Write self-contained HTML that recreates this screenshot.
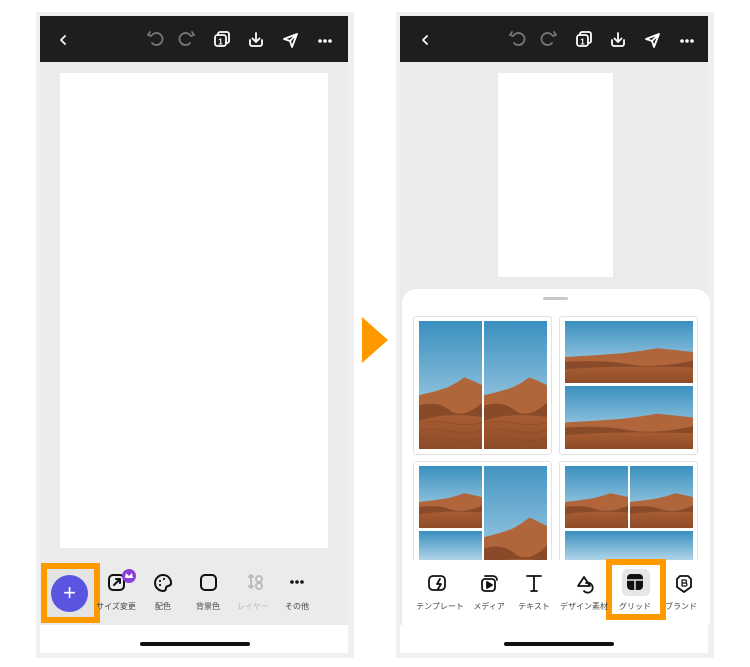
<!DOCTYPE html>
<html><head><meta charset="utf-8"><style>
*{margin:0;padding:0;box-sizing:border-box}
body{width:750px;height:667px;background:#fff;position:relative;overflow:hidden;font-family:"Liberation Sans","Noto Sans CJK JP",sans-serif}
.a{position:absolute}
.phone{position:absolute;top:12px;width:318px;height:646px;background:#efefef;border-radius:2px}
.top{position:absolute;left:4px;top:4px;width:308px;height:46px;background:#1e1e1e}
.bg{position:absolute;left:4px;top:50px;width:308px;height:563px;background:#ebebeb}
.home{position:absolute;left:4px;top:613px;width:308px;height:28px;background:#fff}
.bar{position:absolute;top:17px;width:110px;height:4px;border-radius:2px;background:#111;left:99px}
.lbl{position:absolute;font-size:8px;color:#444;white-space:nowrap;transform:translateX(-50%)}
.cell{position:absolute;overflow:hidden;background:#6aa8cf}
.card{position:absolute;background:#fff;border:1px solid #e2e2e2;border-radius:3px}
</style></head><body>
<svg width="0" height="0" style="position:absolute">
<defs>
<linearGradient id="sky" x1="0" y1="0" x2="0" y2="1"><stop offset="0" stop-color="#3a8fbf"/><stop offset="1" stop-color="#c3e0ef"/></linearGradient>
<linearGradient id="sand" x1="0" y1="0" x2="0" y2="1"><stop offset="0" stop-color="#a85d33"/><stop offset="1" stop-color="#8e4b28"/></linearGradient>
<symbol id="des" viewBox="0 0 100 100" preserveAspectRatio="none">
<rect width="100" height="100" fill="url(#sky)"/>
<path d="M0 58 L25 55 L45 52 L60 48 L72 44 L82 46 L100 50 L100 100 L0 100Z" fill="#b0653a"/>
<path d="M0 66 Q30 62 50 70 Q70 77 100 64 L100 100 L0 100Z" fill="#6a351b" opacity=".55"/>
<path d="M0 78 Q40 71 100 75 L100 100 L0 100Z" fill="url(#sand)"/>
</symbol>
</defs></svg>

<!-- LEFT PHONE -->
<div class="phone" style="left:36px">
<div class="top"></div>
<div class="bg"></div>
<div class="home"><div class="bar" style="left:100px"></div></div>
</div>
<svg class="a" style="left:40px;top:16px" width="308" height="46" fill="none" stroke="#fff" stroke-width="1.8" stroke-linecap="round" stroke-linejoin="round">
<path d="M25 20l-4 4 4 4"/>
<g stroke="#777"><path d="M112 23a6 6 0 1 1 0 8" transform="translate(0,-4)"/><path d="M110 16l-2 3 3 1"/><path d="M150 23a6 6 0 1 0 0 8" transform="translate(0,-4)"/><path d="M152 16l2 3-3 1"/></g>
<rect x="175" y="19" width="11" height="11" rx="2.5"/><path d="M178 19v-1a2 2 0 0 1 2-2h7a2 2 0 0 1 2 2v7a2 2 0 0 1-2 2h-1"/>
<text x="180.5" y="28.5" fill="#fff" stroke="none" font-size="8" font-weight="bold" text-anchor="middle" font-family="Liberation Sans">1</text>
<path d="M216 17v9m-3.5-3.5 3.5 3.5 3.5-3.5M210 24v4a2 2 0 0 0 2 2h8a2 2 0 0 0 2-2v-4"/>
<path d="M257 18l-13 5 6 2 2 6z M250 25l7-7"/>
<g fill="#fff" stroke="none"><circle cx="280" cy="25" r="1.8"/><circle cx="285" cy="25" r="1.8"/><circle cx="290" cy="25" r="1.8"/></g>
</svg>
<div class="a" style="left:60px;top:73px;width:268px;height:475px;background:#fff"></div>
<div class="a" style="left:41px;top:563px;width:59px;height:60px;background:#ff9900"></div>
<div class="a" style="left:47px;top:569px;width:47px;height:48px;background:#e4e4e4"></div>
<div class="a" style="left:51px;top:575px;width:37px;height:37px;border-radius:50%;background:#5a55e0;color:#fff;font-size:22px;line-height:36px;text-align:center">+</div>
<svg class="a" style="left:100px;top:565px" width="240" height="35" fill="none" stroke="#111" stroke-width="2" stroke-linejoin="round" stroke-linecap="round">
<rect x="9" y="10" width="15" height="15" rx="4"/><path d="M14 20l6-6m-4 0h4v4"/>
<circle cx="29" cy="11" r="7" fill="#8a3fd6" stroke="none"/><path d="M25 13l1-5 3 3 3-3 1 5z" fill="#fff" stroke="none"/>
<path d="M63 26a8 8 0 1 1 8-7c-1 3-5 1-5 4 0 2-1 3-3 3z"/>
<g fill="#111" stroke="none"><circle cx="60" cy="16" r="1.1"/><circle cx="64" cy="14" r="1.1"/><circle cx="60" cy="20" r="1.1"/></g>
<rect x="101" y="10" width="15" height="15" rx="4"/>
<g stroke="#bbb"><path d="M151 10v13m-2-2 2 2 2-2M149 12l2-2 2 2"/><circle cx="159" cy="14" r="3"/><circle cx="159" cy="21" r="3"/></g>
<g fill="#111" stroke="none"><circle cx="192" cy="17" r="1.8"/><circle cx="197" cy="17" r="1.8"/><circle cx="202" cy="17" r="1.8"/></g>
</svg>
<div class="lbl" style="left:116px;top:601px">サイズ変更</div>
<div class="lbl" style="left:163px;top:601px">配色</div>
<div class="lbl" style="left:208px;top:601px">背景色</div>
<div class="lbl" style="left:253px;top:601px;color:#bbb">レイヤー</div>
<div class="lbl" style="left:297px;top:601px">その他</div>

<!-- ARROW -->
<svg class="a" style="left:362px;top:317px" width="26" height="46"><path d="M0 0L26 23L0 46Z" fill="#ff9900"/></svg>

<!-- RIGHT PHONE -->
<div class="phone" style="left:396px">
<div class="top"></div>
<div class="bg"></div>
<div class="home"><div class="bar" style="left:104px"></div></div>
</div>
<svg class="a" style="left:400px;top:16px" width="308" height="46" fill="none" stroke="#fff" stroke-width="1.8" stroke-linecap="round" stroke-linejoin="round">
<path d="M27 20l-4 4 4 4"/>
<g stroke="#777"><path d="M114 23a6 6 0 1 1 0 8" transform="translate(0,-4)"/><path d="M112 16l-2 3 3 1"/><path d="M152 23a6 6 0 1 0 0 8" transform="translate(0,-4)"/><path d="M154 16l2 3-3 1"/></g>
<rect x="177" y="19" width="11" height="11" rx="2.5"/><path d="M180 19v-1a2 2 0 0 1 2-2h7a2 2 0 0 1 2 2v7a2 2 0 0 1-2 2h-1"/>
<text x="182.5" y="28.5" fill="#fff" stroke="none" font-size="8" font-weight="bold" text-anchor="middle" font-family="Liberation Sans">1</text>
<path d="M218 17v9m-3.5-3.5 3.5 3.5 3.5-3.5M212 24v4a2 2 0 0 0 2 2h8a2 2 0 0 0 2-2v-4"/>
<path d="M259 18l-13 5 6 2 2 6z M252 25l7-7"/>
<g fill="#fff" stroke="none"><circle cx="282" cy="25" r="1.8"/><circle cx="287" cy="25" r="1.8"/><circle cx="292" cy="25" r="1.8"/></g>
</svg>
<div class="a" style="left:498px;top:73px;width:115px;height:204px;background:#fff"></div>
<div class="a" style="left:402px;top:289px;width:308px;height:336px;background:#fff;border-radius:14px 14px 0 0"></div>
<div class="a" style="left:543px;top:297px;width:25px;height:3px;border-radius:2px;background:#c8c8c8"></div>

<div class="card" style="left:413px;top:316px;width:139px;height:139px"></div>
<div class="card" style="left:559px;top:316px;width:139px;height:139px"></div>
<div class="card" style="left:413px;top:461px;width:139px;height:110px"></div>
<div class="card" style="left:559px;top:461px;width:139px;height:110px"></div>

<svg class="cell" style="left:419px;top:321px" width="63" height="128"><use href="#des" width="63" height="128"/><g stroke="#7a3f20" stroke-width=".5" fill="none" opacity=".6"><path d="M0 110q15-3 30 0t33 0M0 118q15-3 30 0t33 0M0 102q15-3 30 0t33 0"/></g></svg>
<svg class="cell" style="left:484px;top:321px" width="63" height="128"><use href="#des" width="63" height="128"/><g stroke="#7a3f20" stroke-width=".5" fill="none" opacity=".6"><path d="M0 110q15-3 30 0t33 0M0 118q15-3 30 0t33 0M0 102q15-3 30 0t33 0"/></g></svg>
<svg class="cell" style="left:565px;top:321px" width="128" height="62"><use href="#des" width="128" height="62"/></svg>
<svg class="cell" style="left:565px;top:386px" width="128" height="63"><use href="#des" width="128" height="63"/></svg>

<svg class="cell" style="left:419px;top:466px" width="63" height="62"><use href="#des" width="63" height="62"/></svg>
<svg class="cell" style="left:419px;top:531px" width="63" height="34"><rect width="63" height="34" fill="url(#sky)"/></svg>
<svg class="cell" style="left:484px;top:466px" width="63" height="99"><use href="#des" width="63" height="140" y="-10"/></svg>
<svg class="cell" style="left:565px;top:466px" width="63" height="62"><use href="#des" width="63" height="62"/></svg>
<svg class="cell" style="left:630px;top:466px" width="63" height="62"><use href="#des" width="63" height="62"/></svg>
<svg class="cell" style="left:565px;top:531px" width="128" height="34"><rect width="128" height="34" fill="url(#sky)"/></svg>

<div class="a" style="left:402px;top:560px;width:308px;height:65px;background:#fff"></div>
<div class="a" style="left:606px;top:559px;width:60px;height:61px;background:#ff9900"></div>
<div class="a" style="left:612px;top:565px;width:48px;height:49px;background:#fff"></div>
<div class="a" style="left:622px;top:569px;width:28px;height:27px;border-radius:5px;background:#e6e6e6"></div>
<svg class="a" style="left:400px;top:565px" width="310" height="35" fill="none" stroke="#111" stroke-width="1.8" stroke-linejoin="round" stroke-linecap="round">
<path d="M33 11h8a4 4 0 0 1 4 4v6a4 4 0 0 1-4 4h-8a4 4 0 0 1-4-4v-6a4 4 0 0 1 4-4z M40 14l-3 5h4l-3 5"/>
<rect x="82" y="14" width="13" height="12" rx="3"/><path d="M85 11h8a4 4 0 0 1 4 4" /><path d="M87 17v6l5-3z" fill="#111"/>
<path d="M127 11h14M134 11v15M131 26h6"/>
<path d="M184 12l-6 9h12z M186 18a5 5 0 1 1-2 8"/>
<rect x="227" y="9" width="16" height="16" rx="4" fill="#111" stroke="none"/><path d="M227 15h16M235 15v10" stroke="#e6e6e6" stroke-width="1.5"/>
<path d="M280 11h8l3 3v8l-7 5-7-5v-8z"/><path d="M282 15h3a1.5 1.5 0 0 1 0 3h-3v-3zm0 3h3.5a1.5 1.5 0 0 1 0 3h-3.5z" stroke-width="1.2"/>
</svg>
<div class="lbl" style="left:440px;top:601px">テンプレート</div>
<div class="lbl" style="left:489px;top:601px">メディア</div>
<div class="lbl" style="left:534px;top:601px">テキスト</div>
<div class="lbl" style="left:584px;top:601px">デザイン素材</div>
<div class="lbl" style="left:635px;top:601px">グリッド</div>
<div class="lbl" style="left:681px;top:601px">ブランド</div>
</body></html>
